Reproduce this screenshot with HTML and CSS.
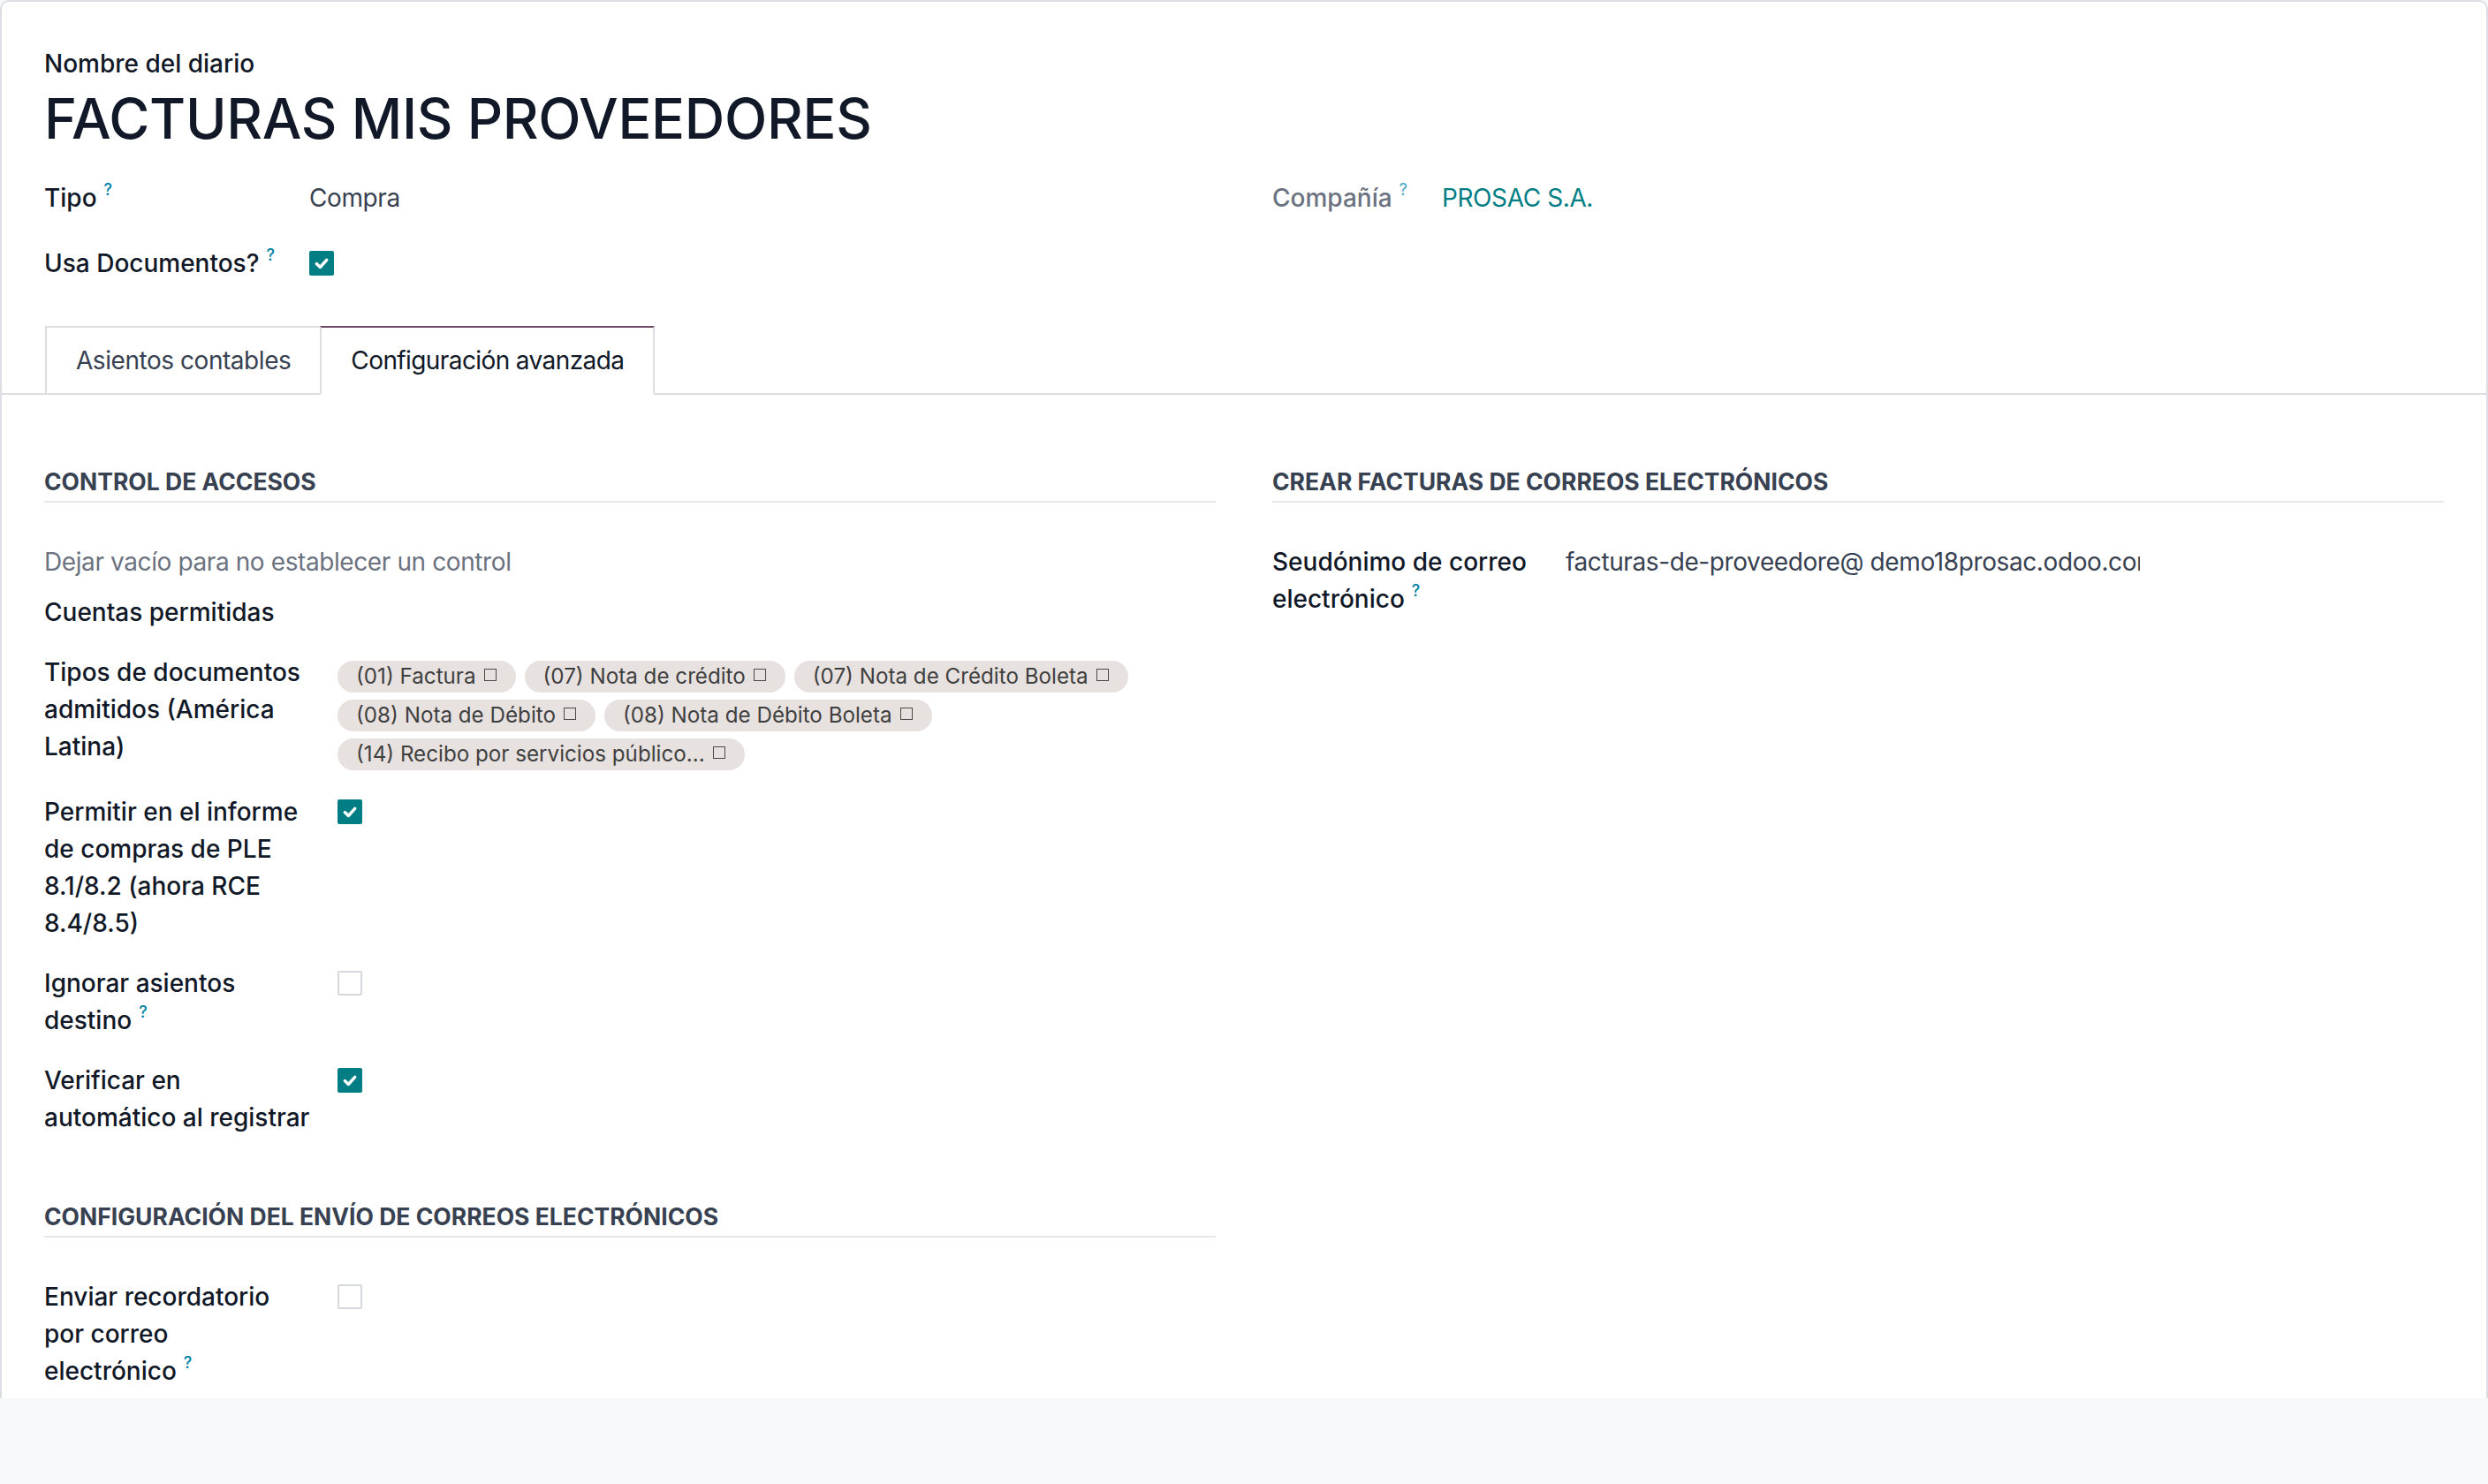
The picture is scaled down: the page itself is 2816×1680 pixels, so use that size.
FILE: index.html
```html
<!DOCTYPE html>
<html lang="es">
<head>
<meta charset="utf-8">
<title>FACTURAS MIS PROVEEDORES</title>
<link rel="stylesheet" href="styles.css">
</head>
<body>
<div class="sheet">
  <div class="title-block">
    <div class="title-label">Nombre del diario</div>
    <h1 class="title">FACTURAS MIS PROVEEDORES</h1>
  </div>

  <div class="cols top-groups">
    <div class="group group-main">
      <div class="grow">
        <div class="lbl"><span class="nw">Tipo<sup class="help">?</sup></span></div>
        <div class="val">Compra</div>
      </div>
      <div class="grow">
        <div class="lbl">Usa <span class="nw">Documentos?<sup class="help">?</sup></span></div>
        <div class="val"><span class="cb on"><svg viewBox="0 0 16 16"><path d="M4.2 8.4 L6.9 11 L11.8 5.6"/></svg></span></div>
      </div>
    </div>
    <div class="group group-company">
      <div class="grow">
        <div class="lbl muted"><span class="nw">Compañía<sup class="help light">?</sup></span></div>
        <div class="val"><span class="link">PROSAC S.A.</span></div>
      </div>
    </div>
  </div>

  <div class="tabs">
    <div class="tab">Asientos contables</div>
    <div class="tab active">Configuración avanzada</div>
  </div>

  <div class="cols pane">
    <div class="col">
      <div class="sep">CONTROL DE ACCESOS</div>
      <div class="help-text">Dejar vacío para no establecer un control</div>
      <div class="row">
        <div class="lbl">Cuentas permitidas</div>
        <div class="val"></div>
      </div>
      <div class="row">
        <div class="lbl">Tipos de documentos admitidos (América Latina)</div>
        <div class="val tags">
          <span class="tag">(01) Factura<i class="sq"></i></span>
          <span class="tag">(07) Nota de crédito<i class="sq"></i></span>
          <span class="tag">(07) Nota de Crédito Boleta<i class="sq"></i></span>
          <span class="tag">(08) Nota de Débito<i class="sq"></i></span>
          <span class="tag">(08) Nota de Débito Boleta<i class="sq"></i></span>
          <span class="tag">(14) Recibo por servicios público...<i class="sq"></i></span>
        </div>
      </div>
      <div class="row">
        <div class="lbl">Permitir en el informe de compras de PLE 8.1/8.2 (ahora RCE 8.4/8.5)</div>
        <div class="val"><span class="cb on"><svg viewBox="0 0 16 16"><path d="M4.2 8.4 L6.9 11 L11.8 5.6"/></svg></span></div>
      </div>
      <div class="row">
        <div class="lbl">Ignorar asientos <span class="nw">destino<sup class="help">?</sup></span></div>
        <div class="val"><span class="cb"></span></div>
      </div>
      <div class="row">
        <div class="lbl">Verificar en automático al registrar</div>
        <div class="val"><span class="cb on"><svg viewBox="0 0 16 16"><path d="M4.2 8.4 L6.9 11 L11.8 5.6"/></svg></span></div>
      </div>

      <div class="sep sep-next">CONFIGURACIÓN DEL ENVÍO DE CORREOS ELECTRÓNICOS</div>
      <div class="row">
        <div class="lbl">Enviar recordatorio por correo <span class="nw">electrónico<sup class="help">?</sup></span></div>
        <div class="val"><span class="cb"></span></div>
      </div>
    </div>

    <div class="col">
      <div class="sep">CREAR FACTURAS DE CORREOS ELECTRÓNICOS</div>
      <div class="row">
        <div class="lbl">Seudónimo de correo <span class="nw">electrónico<sup class="help">?</sup></span></div>
        <div class="val"><span class="alias">facturas-de-proveedore@ demo18prosac.odoo.com</span></div>
      </div>
    </div>
  </div>
</div>
</body>
</html>
```

FILE: styles.css
```css
* { box-sizing: border-box; }

html, body {
  margin: 0;
  padding: 0;
}

body {
  background: #f8f9fa;
  font-family: Inter, "Noto Sans", "Liberation Sans", sans-serif;
  font-size: 28px;
  line-height: 42px;
  color: #111827;
  width: 2816px;
  height: 1680px;
  overflow: hidden;
}

.sheet {
  width: 2816px;
  height: 1583px;
  overflow: hidden;
  background: #ffffff;
  border: 2px solid #dcdee2;
  border-bottom: none;
  border-radius: 10px 10px 0 0;
  padding-top: 49px;
}

.title-block {
  padding: 0 48px;
}

.title-label {
  font-weight: 500;
  line-height: 42px;
  color: #111827;
}

.title {
  margin: 3px 0 0 0;
  font-size: 63px;
  line-height: 76px;
  font-weight: 500;
  color: #111827;
  letter-spacing: -0.3px;
}

.cols {
  display: grid;
  grid-template-columns: 1fr 1fr;
  column-gap: 64px;
  padding: 0 48px;
}

.top-groups {
  margin-top: 31px;
}

.group {
  display: flex;
  flex-direction: column;
  gap: 32px;
}

.grow {
  display: grid;
  grid-template-columns: 300px 1fr;
  align-items: start;
}

.group-company .grow {
  grid-template-columns: 192px 1fr;
}

.lbl {
  font-weight: 500;
  color: #111827;
}

.lbl.muted {
  color: #6b7280;
}

.nw {
  white-space: nowrap;
}

.val {
  color: #374151;
  min-width: 0;
  letter-spacing: -0.4px;
}

.help {
  display: inline-block;
  font-size: 18px;
  line-height: 18px;
  vertical-align: top;
  color: #0180a5;
  margin-left: 8px;
  font-weight: 500;
  position: relative;
  top: 3px;
}

.help.light {
  color: #5aaecb;
}

.link {
  color: #017e84;
}

.cb {
  display: inline-block;
  width: 28px;
  height: 28px;
  border: 2px solid #d5d8dd;
  border-radius: 2px;
  background: #ffffff;
  vertical-align: top;
  margin-top: 7px;
}

.cb.on {
  background: #017e84;
  border-color: #017e84;
}

.cb svg {
  display: block;
  width: 24px;
  height: 24px;
}

.cb svg path {
  fill: none;
  stroke: #ffffff;
  stroke-width: 2.3;
  stroke-linecap: round;
  stroke-linejoin: round;
}

.tabs {
  display: flex;
  margin-top: 50px;
  padding-left: 49px;
  border-bottom: 2px solid #dcdee2;
}

.tab {
  border: 2px solid #dcdee2;
  background: #ffffff;
  padding: 16px 33px 16px 33px;
  line-height: 42px;
  color: #374151;
  margin-bottom: -2px;
  letter-spacing: -0.45px;
}

.tab + .tab {
  margin-left: -2px;
}

.tab.active {
  color: #111827;
  border-top-color: #714b67;
  border-bottom-color: #ffffff;
  letter-spacing: -0.6px;
}

.pane {
  padding-top: 80px;
}

.col {
  display: flex;
  flex-direction: column;
  min-width: 0;
}

.sep {
  font-size: 26.5px;
  font-weight: 700;
  line-height: 36px;
  color: #374151;
  padding-bottom: 4px;
  border-bottom: 2px solid #e5e7eb;
  margin-bottom: 46px;
}

.sep-next {
  margin-top: 47px;
}

.help-text {
  color: #6b7280;
  margin-bottom: 15px;
  letter-spacing: -0.4px;
}

.row {
  display: grid;
  grid-template-columns: 332px 1fr;
  align-items: start;
  margin-bottom: 26px;
}

.row .lbl {
  padding-right: 30px;
}

.tags {
  display: flex;
  flex-wrap: wrap;
  gap: 8px 10px;
  padding-top: 8px;
  letter-spacing: 0;
}

.tag {
  display: inline-flex;
  align-items: center;
  height: 36px;
  padding: 0 22px 0 21px;
  border-radius: 18px;
  background: #e7e1e0;
  color: #3f3f3f;
  font-size: 24.2px;
  line-height: 36px;
  white-space: nowrap;
}

.sq {
  display: inline-block;
  width: 14px;
  height: 14px;
  border: 1.5px solid #4a4a4a;
  margin-left: 9px;
  position: relative;
  top: -2px;
}

.alias {
  display: inline-block;
  width: 650px;
  overflow: hidden;
  white-space: nowrap;
  vertical-align: top;
  color: #374151;
}
```
